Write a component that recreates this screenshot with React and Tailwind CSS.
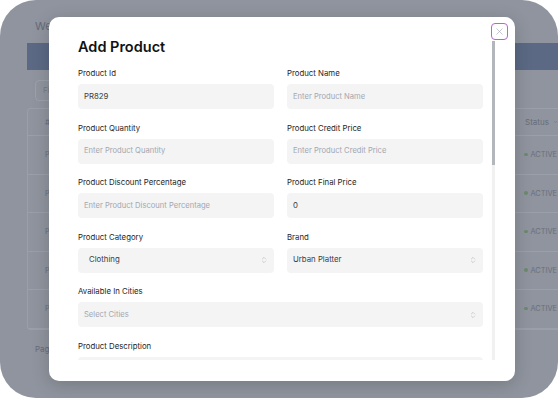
import { X, ChevronsUpDown, ChevronDown } from "lucide-react";

const font = { fontFamily: "Inter, 'Noto Sans', sans-serif" };

function Field({ label, value, placeholder, select, pad = "pl-[6px]" }) {
  return (
    <div className="flex flex-col">
      <label className="text-[7.8px] leading-[12px] font-normal text-[#262626] mb-[5px]">{label}</label>
      <div className={`h-[25px] rounded-[4px] bg-[#f4f4f5] flex items-center justify-between ${pad} pr-[6px]`}>
        {value ? (
          <span className="text-[7.8px] text-[#404040]">{value}</span>
        ) : (
          <span className="text-[7.6px] text-[#a3a7af]">{placeholder}</span>
        )}
        {select && <ChevronsUpDown size={8} strokeWidth={1.4} className="text-[#a1a1aa]" />}
      </div>
    </div>
  );
}

export default function App() {
  const rows = [0, 1, 2, 3, 4];

  return (
    <div className="w-[560px] h-[400px] bg-white overflow-hidden relative" style={font}>
      {/* dimmed page behind the modal */}
      <div className="w-[558px] h-[398px] rounded-[36px] bg-[#8f949e] pl-[27px] pt-[18px] flex flex-col overflow-hidden">
        <div className="pl-[8px] h-[25px] text-[11px] text-[#666b78]">Welcome back</div>
        <div className="h-[27px] bg-[#5b6984]"></div>
        <div className="pl-[8px] pt-[10px] h-[38px]">
          <div className="w-[160px] h-[21px] rounded-[4px] border border-[#9ba0aa] pl-[7px] text-[8px] leading-[19px] text-[#767b87]">
            Filter
          </div>
        </div>
        <div className="border border-[#9a9fa9] border-r-0 rounded-l-[4px] flex flex-col">
          <div className="h-[27px] flex items-center justify-between border-b border-[#9a9fa9] pl-[17px] text-[8px] text-[#686d7a]">
            <span>#</span>
            <span className="flex items-center gap-[4px] w-[33px] shrink-0">
              Status <ChevronDown size={8} />
            </span>
          </div>
          {rows.map((r) => (
            <div key={r} className="h-[38.5px] flex items-center justify-between border-b border-[#9a9fa9] pl-[17px] text-[7.4px] text-[#6b707c]">
              <span>PR82{r}</span>
              <span className="flex items-center gap-[3px] w-[34px] shrink-0">
                <span className="w-[3.5px] h-[3.5px] rounded-full bg-[#6c8a70] shrink-0"></span>
                ACTIVE
              </span>
            </div>
          ))}
        </div>
        <div className="pl-[8px] pt-[13px] text-[8px] text-[#686d7a]">Page 1 of 4</div>
      </div>

      {/* modal */}
      <div className="absolute left-[49px] top-[17px] w-[466px] h-[364px] rounded-[10px] bg-white shadow-[0_4px_18px_rgba(0,0,0,0.18)]">
        <button className="absolute left-[442px] top-[6px] w-[17px] h-[17px] rounded-[4px] border-[1.5px] border-[#b36ac9] flex items-center justify-center bg-white">
          <X size={11} strokeWidth={1.3} className="text-[#9ca3af]" />
        </button>
        <div className="absolute left-[443px] top-[24px] w-[3px] h-[319px] bg-[#f1f1f2]"></div>
        <div className="absolute left-[443px] top-[24px] w-[3px] h-[124px] bg-[#b3b6ba]"></div>

        <div className="h-[343px] overflow-hidden pl-[29px] pt-[20px]">
          <h1 className="text-[14.5px] leading-[20px] font-semibold text-[#111] mb-[10px]">Add Product</h1>
          <div className="w-[405px] grid grid-cols-2 gap-x-[13px] gap-y-[12.5px]">
            <Field label="Product Id" value="PR829" />
            <Field label="Product Name" placeholder="Enter Product Name" />
            <Field label="Product Quantity" placeholder="Enter Product Quantity" />
            <Field label="Product Credit Price" placeholder="Enter Product Credit Price" />
            <Field label="Product Discount Percentage" placeholder="Enter Product Discount Percentage" />
            <Field label="Product Final Price" value="0" />
            <Field label="Product Category" value="Clothing" select pad="pl-[11px]" />
            <Field label="Brand" value="Urban Platter" select />
            <div className="col-span-2">
              <Field label="Available In Cities" placeholder="Select Cities" select />
            </div>
            <div className="col-span-2">
              <Field label="Product Description" placeholder="" />
            </div>
          </div>
        </div>
      </div>
    </div>
  );
}
